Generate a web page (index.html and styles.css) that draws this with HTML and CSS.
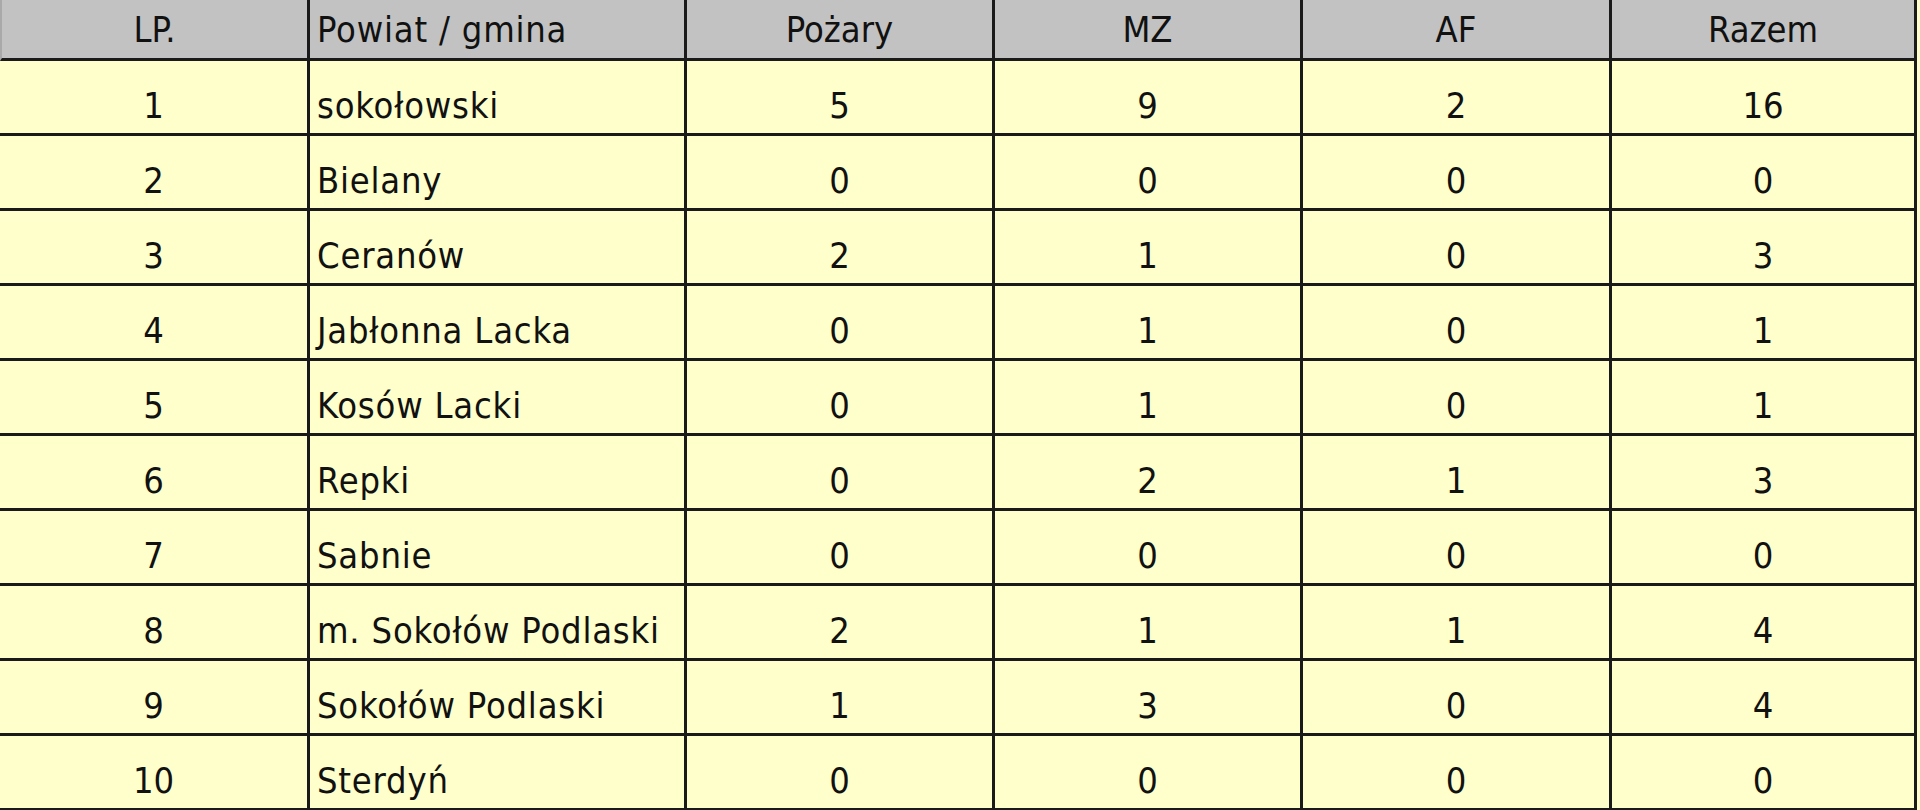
FILE: index.html
```html
<!DOCTYPE html>
<html lang="pl">
<head>
<meta charset="utf-8">
<title>Zdarzenia - powiat sokołowski</title>
<link rel="stylesheet" href="styles.css">
</head>
<body>
<div class="table">
  <div class="row head">
    <div class="cell c">LP.</div>
    <div class="cell l">Powiat / gmina</div>
    <div class="cell c">Pożary</div>
    <div class="cell c">MZ</div>
    <div class="cell c">AF</div>
    <div class="cell c">Razem</div>
  </div>
  <div class="row"><div class="cell c">1</div><div class="cell l">sokołowski</div><div class="cell c">5</div><div class="cell c">9</div><div class="cell c">2</div><div class="cell c">16</div></div>
  <div class="row"><div class="cell c">2</div><div class="cell l">Bielany</div><div class="cell c">0</div><div class="cell c">0</div><div class="cell c">0</div><div class="cell c">0</div></div>
  <div class="row"><div class="cell c">3</div><div class="cell l">Ceranów</div><div class="cell c">2</div><div class="cell c">1</div><div class="cell c">0</div><div class="cell c">3</div></div>
  <div class="row"><div class="cell c">4</div><div class="cell l">Jabłonna Lacka</div><div class="cell c">0</div><div class="cell c">1</div><div class="cell c">0</div><div class="cell c">1</div></div>
  <div class="row"><div class="cell c">5</div><div class="cell l">Kosów Lacki</div><div class="cell c">0</div><div class="cell c">1</div><div class="cell c">0</div><div class="cell c">1</div></div>
  <div class="row"><div class="cell c">6</div><div class="cell l">Repki</div><div class="cell c">0</div><div class="cell c">2</div><div class="cell c">1</div><div class="cell c">3</div></div>
  <div class="row"><div class="cell c">7</div><div class="cell l">Sabnie</div><div class="cell c">0</div><div class="cell c">0</div><div class="cell c">0</div><div class="cell c">0</div></div>
  <div class="row"><div class="cell c">8</div><div class="cell l">m. Sokołów Podlaski</div><div class="cell c">2</div><div class="cell c">1</div><div class="cell c">1</div><div class="cell c">4</div></div>
  <div class="row"><div class="cell c">9</div><div class="cell l">Sokołów Podlaski</div><div class="cell c">1</div><div class="cell c">3</div><div class="cell c">0</div><div class="cell c">4</div></div>
  <div class="row"><div class="cell c">10</div><div class="cell l">Sterdyń</div><div class="cell c">0</div><div class="cell c">0</div><div class="cell c">0</div><div class="cell c">0</div></div>
</div>
</body>
</html>
```
FILE: styles.css
```css
html, body {
  margin: 0;
  padding: 0;
  background: #ffffcc;
}
body {
  font-family: "DejaVu Sans Condensed", "DejaVu Sans", sans-serif;
  font-stretch: condensed;
  color: #111111;
  overflow: hidden;
}
.table {
  display: flex;
  flex-direction: column;
  width: 1917px;
}
.row {
  display: grid;
  grid-template-columns: 310px 377px 308px 308px 309px 305px;
  height: 75px;
  background: #ffffcc;
}
.row.head {
  height: 61px;
  background: #c2c2c2;
}
.cell {
  box-sizing: border-box;
  border-right: 3px solid #1a1a1a;
  border-bottom: 3px solid #1a1a1a;
  font-size: 36px;
  line-height: 40px;
  padding-top: 25px;
  white-space: nowrap;
  overflow: hidden;
}
.head .cell {
  padding-top: 10px;
}
.head .cell:first-child {
  border-left: 2px solid #a9a9a9;
}
.c {
  text-align: center;
}
.l {
  text-align: left;
  padding-left: 7px;
  letter-spacing: 0.8px;
}
```
